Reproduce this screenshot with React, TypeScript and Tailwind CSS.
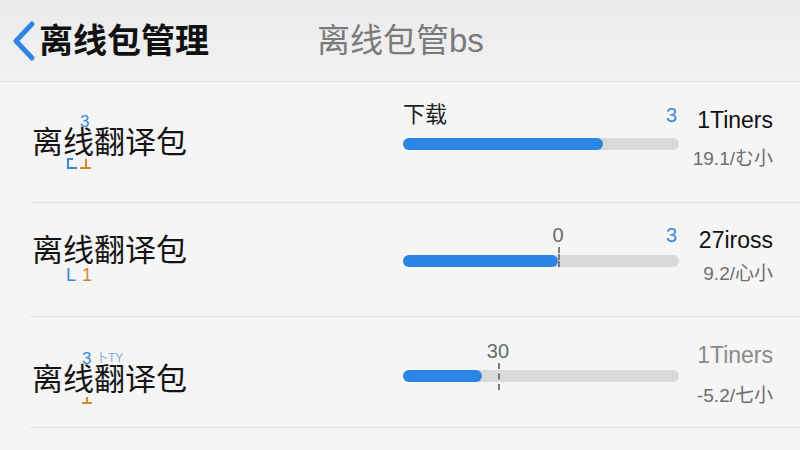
import React from 'react'

type Row = {
	height: number
	labelTop: number
	barLine: number
	barGap: number
	fill: number
	topLeft?: string
	topRight?: string
	marker?: {at: number; text: string; tickTop: number; tickHeight: number}
	primary: string
	primaryMuted?: boolean
	primaryTop: number
	secondary: string
	secondaryGap: number
	notes: React.ReactNode
}

const blue = 'text-[#3a88d4]'
const orange = 'text-[#d18a34]'

const rows: Row[] = [
	{
		height: 121,
		labelTop: 45,
		barLine: 21,
		barGap: 11,
		fill: 72.5,
		topLeft: '下载',
		topRight: '3',
		primary: '1Tiners',
		primaryTop: 24,
		secondary: '19.1/む小',
		secondaryGap: 13,
		notes: (
			<>
				<span className={`absolute left-[48px] top-[-14px] text-[17px] leading-[17px] ${blue}`}>3</span>
				<span className="absolute left-[35px] top-[31px] h-[11px] w-[10px] border-b-2 border-l-2 border-[#3a88d4]">
					<span className="absolute left-0 top-0 h-[2px] w-[4px] bg-[#3a88d4]" />
				</span>
				<span className="absolute left-[48px] top-[32px] flex h-[10px] w-[11px] flex-col items-center">
					<span className="h-[8px] w-[2px] bg-[#d18a34]" />
					<span className="h-[2px] w-[11px] bg-[#d18a34]" />
				</span>
			</>
		),
	},
	{
		height: 114,
		labelTop: 32,
		barLine: 20,
		barGap: 8,
		fill: 56.2,
		topRight: '3',
		marker: {at: 56.2, text: '0', tickTop: -8, tickHeight: 20},
		primary: '27iross',
		primaryTop: 23,
		secondary: '9.2/心小',
		secondaryGap: 8,
		notes: (
			<>
				<span className={`absolute left-[34px] top-[31px] text-[18px] leading-[18px] ${blue}`}>L</span>
				<span className={`absolute left-[50px] top-[31px] text-[18px] leading-[18px] ${orange}`}>1</span>
			</>
		),
	},
	{
		height: 111,
		labelTop: 47,
		barLine: 22,
		barGap: 7,
		fill: 28.6,
		marker: {at: 34.4, text: '30', tickTop: -7, tickHeight: 27},
		primary: '1Tiners',
		primaryMuted: true,
		primaryTop: 24,
		secondary: '-5.2/七小',
		secondaryGap: 15,
		notes: (
			<>
				<span className={`absolute left-[50px] top-[-14px] text-[17px] leading-[17px] ${blue}`}>3</span>
				<span className="absolute left-[64px] top-[-12px] text-[12px] leading-[12px] text-[#5d9fd8] opacity-80">卜TY</span>
				<span className="absolute left-[50px] top-[33px] flex h-[7px] w-[10px] flex-col items-center">
					<span className="h-[5px] w-[2px] bg-[#d18a34]" />
					<span className="h-[2px] w-[10px] bg-[#d18a34]" />
				</span>
			</>
		),
	},
]

function PackageRow({row}: {row: Row}) {
	return (
		<div
			className="flex border-b border-[#e1e1e1]"
			style={{height: row.height}}>
			<div className="w-[373px] pl-[2px]" style={{paddingTop: row.labelTop}}>
				<div className="relative text-[31px] leading-[31px] text-[#141414]">
					离线翻译包
					{row.notes}
				</div>
			</div>
			<div className="w-[276px]" style={{paddingTop: row.barLine}}>
				<div className="relative flex h-[24px] items-center justify-between leading-[24px]">
					<span className="text-[22px] text-[#222]">{row.topLeft}</span>
					<span className={`mr-[2px] text-[20px] ${blue}`}>{row.topRight}</span>
					{row.marker && (
						<span
							className="absolute top-0 -translate-x-1/2 text-[20px] text-[#6b6b6b]"
							style={{left: `${row.marker.at}%`}}>
							{row.marker.text}
						</span>
					)}
				</div>
				<div className="relative h-[12px] rounded-full bg-[#d9d9d9]" style={{marginTop: row.barGap}}>
					<div className="h-full rounded-full bg-[#2a86e2]" style={{width: `${row.fill}%`}} />
					{row.marker && (
						<div
							className="absolute w-0 border-l-2 border-dashed border-[#7a7a7a]"
							style={{left: `${row.marker.at}%`, top: row.marker.tickTop, height: row.marker.tickHeight}}
						/>
					)}
				</div>
			</div>
			<div className="flex flex-1 flex-col items-end pr-[27px]" style={{paddingTop: row.primaryTop}}>
				<span className={`text-[23px] leading-[28px] ${row.primaryMuted ? 'text-[#8a8a8a]' : 'text-[#111]'}`}>
					{row.primary}
				</span>
				<span className="text-[19px] leading-[24px] text-[#6e6e6e]" style={{marginTop: row.secondaryGap}}>
					{row.secondary}
				</span>
			</div>
		</div>
	)
}

export default function App() {
	return (
		<div
			className="h-[450px] w-[800px] overflow-hidden bg-[#f5f5f5]"
			style={{fontFamily: '"Liberation Sans", "Noto Sans CJK SC", sans-serif'}}>
			<header className="flex h-[82px] items-center border-b border-[#dedede] bg-gradient-to-b from-[#ebebeb] to-[#f1f1f1]">
				<svg width="26" height="42" viewBox="0 0 26 42" className="ml-[11px]">
					<path
						d="M21 4 L5 21 L21 38"
						fill="none"
						stroke="#2f85e1"
						strokeWidth="5"
						strokeLinecap="round"
						strokeLinejoin="round"
					/>
				</svg>
				<h1 className="ml-[2px] text-[34px] font-bold leading-[34px] text-[#111]">离线包管理</h1>
				<span className="ml-[108px] text-[33px] leading-[34px] text-[#7a7a7a]">离线包管bs</span>
			</header>
			<div className="pl-[30px]">
				{rows.map((row, i) => (
					<PackageRow key={i} row={row} />
				))}
			</div>
		</div>
	)
}
